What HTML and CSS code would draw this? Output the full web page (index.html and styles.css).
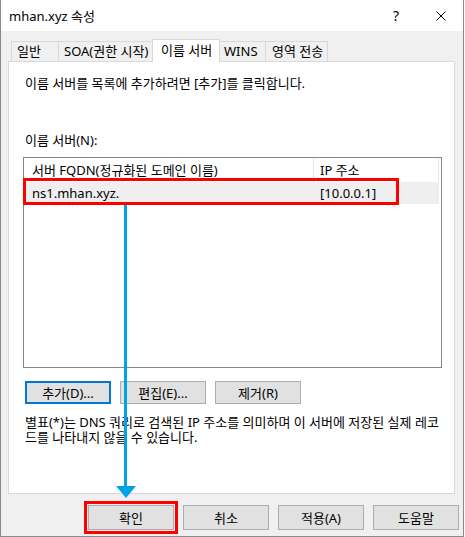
FILE: index.html
```html
<!DOCTYPE html>
<html lang="ko">
<head>
  <meta charset="UTF-8">
  <meta name="viewport" content="width=device-width, initial-scale=1.0">
  <title>mhan.xyz 속성</title>
  <link rel="stylesheet" href="styles.css">
</head>
<body>
<div class="window">
  <!-- Title bar -->
  <div class="titlebar">
    <span class="title">mhan.xyz 속성</span>
    <span class="title-btn help-btn">?</span>
    <span class="title-btn close-btn">
      <svg width="10" height="10" viewBox="0 0 10 10">
        <path d="M0.5 0.5 L9.5 9.5 M9.5 0.5 L0.5 9.5" stroke="#000" stroke-width="1" fill="none"/>
      </svg>
    </span>
  </div>

  <div class="dialog-body">
    <!-- Tabs -->
    <div class="tabs">
      <div class="tab tab-general">일반</div>
      <div class="tab tab-soa">SOA(권한 시작)</div>
      <div class="tab tab-ns active">이름 서버</div>
      <div class="tab tab-wins">WINS</div>
      <div class="tab tab-transfer">영역 전송</div>
    </div>

    <!-- Tab content -->
    <div class="tab-panel">
      <p class="intro">이름 서버를 목록에 추가하려면 [추가]를 클릭합니다.</p>
      <label class="list-label">이름 서버(N):</label>

      <div class="listview">
        <div class="list-head">
          <div class="col col-fqdn">서버 FQDN(정규화된 도메인 이름)</div>
          <div class="col col-ip">IP 주소</div>
        </div>
        <div class="list-row">
          <div class="col col-fqdn">ns1.mhan.xyz.</div>
          <div class="col col-ip">[10.0.0.1]</div>
        </div>
        <span class="callout-box"></span>
      </div>

      <div class="list-buttons">
        <button class="btn btn-default">추가(D)...</button>
        <button class="btn">편집(E)...</button>
        <button class="btn">제거(R)</button>
      </div>

      <p class="note">별표(*)는 DNS 쿼리로 검색된 IP 주소를 의미하며 이 서버에 저장된 실제 레코<br>드를 나타내지 않을 수 있습니다.</p>
    </div>

    <!-- Dialog buttons -->
    <div class="dialog-buttons">
      <button class="btn btn-wide btn-ok">확인</button>
      <button class="btn btn-wide">취소</button>
      <button class="btn btn-wide">적용(A)</button>
      <button class="btn btn-wide">도움말</button>
    </div>
  </div>

  <!-- annotation arrow -->
  <svg class="arrow" width="465" height="537" viewBox="0 0 465 537">
    <line x1="125.5" y1="205" x2="125.5" y2="488" stroke="#00a2e8" stroke-width="3"/>
    <polygon points="116,486 136,486 126,498" fill="#00a2e8"/>
  </svg>
</div>
</body>
</html>
```

FILE: styles.css
```css
body, html {
  margin: 0;
  padding: 0;
  background: #ffffff;
  font-family: "Noto Sans", "Noto Sans CJK KR", sans-serif;
  font-size: 13px;
  color: #000;
}

.window {
  position: relative;
  width: 464px;
  height: 537px;
  box-sizing: border-box;
  background: #f0f0f0;
  border: 1px solid #8a8a8a;
  border-top: none;
  display: flex;
  flex-direction: column;
}

/* title bar */
.titlebar {
  height: 31px;
  background: #ffffff;
  display: flex;
  align-items: center;
}

.title {
  flex: 1;
  padding-left: 8px;
  line-height: 16px;
}

.title-btn {
  height: 31px;
  display: flex;
  align-items: center;
  justify-content: center;
}

.help-btn {
  width: 46px;
  font-size: 14px;
}

.close-btn {
  width: 44px;
}

.dialog-body {
  padding: 0 8px 0 7px;
}

/* tabs */
.tabs {
  display: flex;
  align-items: flex-end;
  height: 22px;
  margin-top: 8px;
  padding-left: 3px;
}

.tab {
  height: 20px;
  box-sizing: border-box;
  border: 1px solid #d9d9d9;
  border-bottom: none;
  background: #f0f0f0;
  padding-left: 5px;
  line-height: 19px;
  white-space: nowrap;
  margin-left: -1px;
}

.tab-general {
  width: 48px;
  margin-left: 0;
}

.tab-soa {
  width: 97px;
}

.tab-ns {
  width: 68px;
}

.tab-wins {
  width: 49px;
  padding-left: 6px;
}

.tab-transfer {
  width: 63px;
  padding-left: 6px;
}

.tab.active {
  position: relative;
  z-index: 1;
  height: 23px;
  margin-left: -3px;
  margin-right: -2px;
  margin-bottom: -1px;
  background: #ffffff;
  padding-left: 8px;
  line-height: 20px;
}

.tab-panel {
  height: 433px;
  box-sizing: border-box;
  background: #ffffff;
  border: 1px solid #d9d9d9;
  padding: 13px 12px 0 14px;
}

.intro {
  margin: 0;
  padding-left: 2px;
  line-height: 16px;
}

.list-label {
  display: block;
  margin-top: 41px;
  padding-left: 2px;
  line-height: 16px;
}

/* list view */
.listview {
  position: relative;
  margin-top: 9px;
  height: 211px;
  box-sizing: border-box;
  border: 1px solid #828790;
  background: #ffffff;
}

.list-head {
  display: flex;
  height: 24px;
  line-height: 24px;
}

.list-head .col {
  border-right: 1px solid #e5e5e5;
}

.list-row {
  display: flex;
  width: 415px;
  height: 22px;
  line-height: 22px;
  background: #efefef;
}

.col {
  box-sizing: border-box;
  white-space: nowrap;
}

.col-fqdn {
  width: 290px;
  padding-left: 8px;
}

.col-ip {
  width: 125px;
  padding-left: 6px;
}

.callout-box {
  position: absolute;
  left: -1px;
  top: 20px;
  width: 376px;
  height: 27px;
  box-sizing: border-box;
  border: 3px solid #ff0000;
}

/* buttons */
.list-buttons {
  display: flex;
  gap: 9px;
  margin-top: 13px;
  padding-left: 2px;
}

.btn {
  width: 86px;
  height: 23px;
  box-sizing: border-box;
  border: 1px solid #adadad;
  background: #e1e1e1;
  font-family: inherit;
  font-size: 13px;
  color: #000;
  padding: 0;
}

.btn-default {
  border: 2px solid #0078d7;
}

.note {
  margin: 11px 0 0;
  padding-left: 2px;
  line-height: 15px;
  white-space: nowrap;
}

.dialog-buttons {
  display: flex;
  justify-content: flex-end;
  gap: 9px;
  margin-top: 11px;
  margin-right: -4px;
}

.btn-wide {
  height: 25px;
}

.btn-ok {
  outline: 3px solid #ff0000;
  outline-offset: 1px;
}

.arrow {
  position: absolute;
  left: -1px;
  top: 0;
  pointer-events: none;
}
```
